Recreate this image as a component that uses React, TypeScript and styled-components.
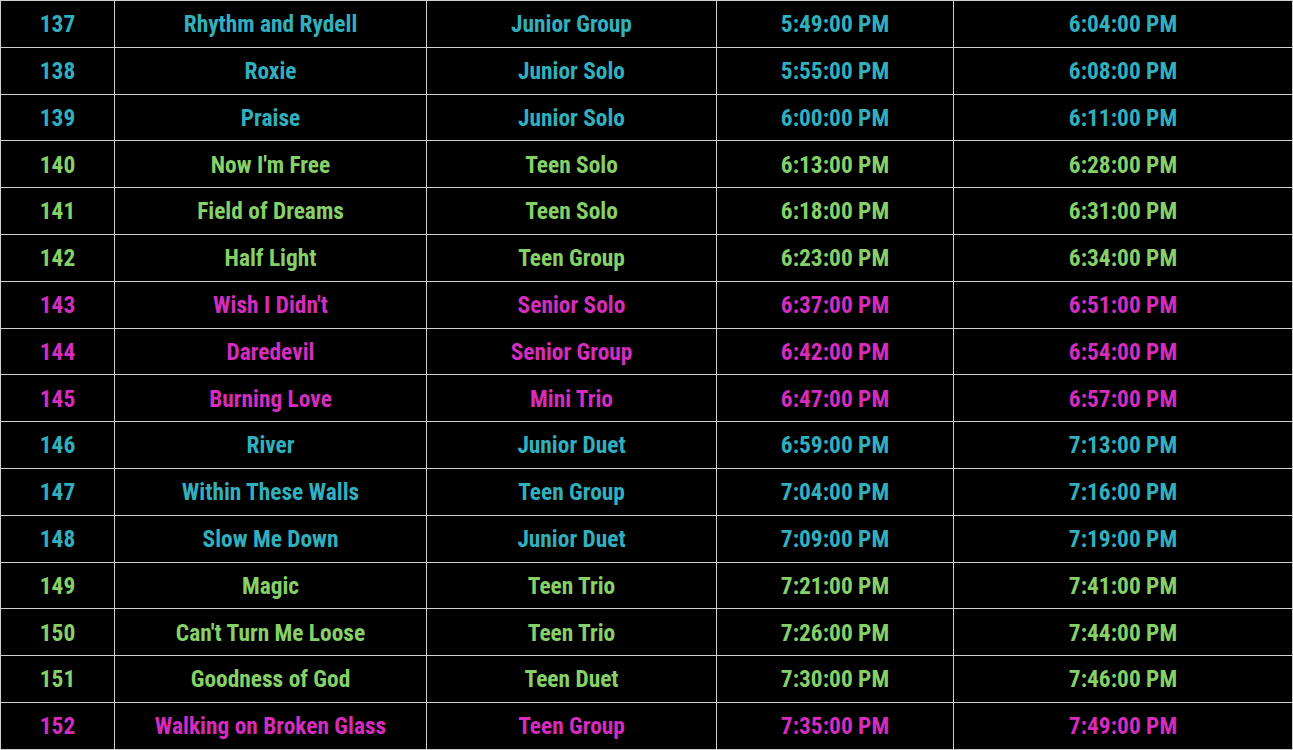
import React from "react";
import styled, { createGlobalStyle } from "styled-components";

const Global = createGlobalStyle`
  html, body { margin: 0; padding: 0; background: #000; }
  body { font-family: "Roboto Condensed", "Roboto", "Liberation Sans", sans-serif; }
`;

type Tone = "teal" | "green" | "pink";
const colors: Record<Tone, string> = {
  teal: "#31afbe",
  green: "#86d068",
  pink: "#d42cbd",
};

const rows: [string, string, string, string, string, Tone][] = [
  ["137", "Rhythm and Rydell", "Junior Group", "5:49:00 PM", "6:04:00 PM", "teal"],
  ["138", "Roxie", "Junior Solo", "5:55:00 PM", "6:08:00 PM", "teal"],
  ["139", "Praise", "Junior Solo", "6:00:00 PM", "6:11:00 PM", "teal"],
  ["140", "Now I'm Free", "Teen Solo", "6:13:00 PM", "6:28:00 PM", "green"],
  ["141", "Field of Dreams", "Teen Solo", "6:18:00 PM", "6:31:00 PM", "green"],
  ["142", "Half Light", "Teen Group", "6:23:00 PM", "6:34:00 PM", "green"],
  ["143", "Wish I Didn't", "Senior Solo", "6:37:00 PM", "6:51:00 PM", "pink"],
  ["144", "Daredevil", "Senior Group", "6:42:00 PM", "6:54:00 PM", "pink"],
  ["145", "Burning Love", "Mini Trio", "6:47:00 PM", "6:57:00 PM", "pink"],
  ["146", "River", "Junior Duet", "6:59:00 PM", "7:13:00 PM", "teal"],
  ["147", "Within These Walls", "Teen Group", "7:04:00 PM", "7:16:00 PM", "teal"],
  ["148", "Slow Me Down", "Junior Duet", "7:09:00 PM", "7:19:00 PM", "teal"],
  ["149", "Magic", "Teen Trio", "7:21:00 PM", "7:41:00 PM", "green"],
  ["150", "Can't Turn Me Loose", "Teen Trio", "7:26:00 PM", "7:44:00 PM", "green"],
  ["151", "Goodness of God", "Teen Duet", "7:30:00 PM", "7:46:00 PM", "green"],
  ["152", "Walking on Broken Glass", "Teen Group", "7:35:00 PM", "7:49:00 PM", "pink"],
];

const Table = styled.table`
  width: 1292px;
  height: 749px;
  border-collapse: collapse;
  table-layout: fixed;
  background: #000;
`;

const Row = styled.tr<{ $tone: Tone }>`
  height: 46.8px;
  color: ${(p) => colors[p.$tone]};
`;

const Cell = styled.td`
  border: 1px solid #cfcfcf;
  padding: 2px 0 0;
  text-align: center;
  vertical-align: middle;
  font-size: 23.4px;
  font-weight: 700;
  font-stretch: condensed;
  line-height: 1;
`;

const widths = [114, 312, 290, 237, 339];

export default function App() {
  return (
    <>
      <Global />
      <Table>
        <colgroup>
          {widths.map((w, i) => (
            <col key={i} style={{ width: w }} />
          ))}
        </colgroup>
        <tbody>
          {rows.map((r) => (
            <Row key={r[0]} $tone={r[5]}>
              {r.slice(0, 5).map((t, i) => (
                <Cell key={i}>{t}</Cell>
              ))}
            </Row>
          ))}
        </tbody>
      </Table>
    </>
  );
}
